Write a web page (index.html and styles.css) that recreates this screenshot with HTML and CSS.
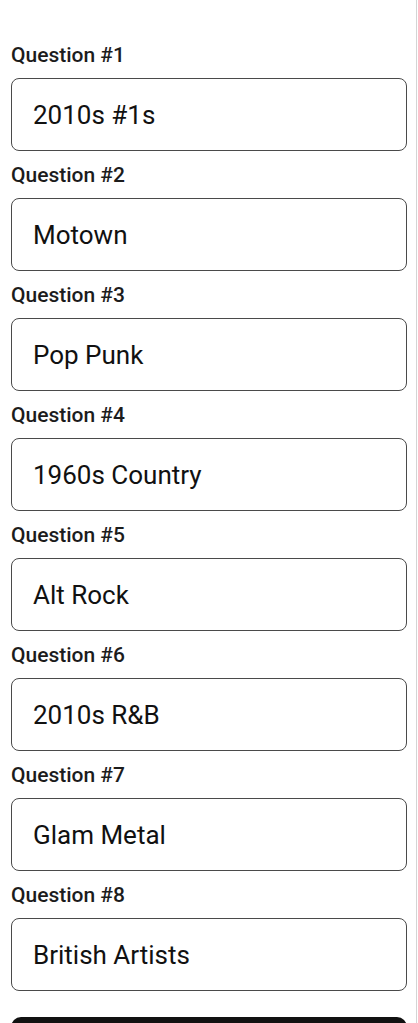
FILE: index.html
```html
<!DOCTYPE html>
<html lang="en">
<head>
    <meta charset="UTF-8">
    <meta name="viewport" content="width=device-width, initial-scale=1.0">
    <title>Quiz Categories</title>
    <link rel="stylesheet" href="styles.css">
</head>
<body>

    <div class="page">
        <form class="quiz-form">
            <label for="q1">Question #1</label>
            <input type="text" id="q1" value="2010s #1s">

            <label for="q2">Question #2</label>
            <input type="text" id="q2" value="Motown">

            <label for="q3">Question #3</label>
            <input type="text" id="q3" value="Pop Punk">

            <label for="q4">Question #4</label>
            <input type="text" id="q4" value="1960s Country">

            <label for="q5">Question #5</label>
            <input type="text" id="q5" value="Alt Rock">

            <label for="q6">Question #6</label>
            <input type="text" id="q6" value="2010s R&amp;B">

            <label for="q7">Question #7</label>
            <input type="text" id="q7" value="Glam Metal">

            <label for="q8">Question #8</label>
            <input type="text" id="q8" value="British Artists">

            <button type="submit">Start Quiz</button>
        </form>
    </div>

</body>
</html>
```

FILE: styles.css
```css
/* Global */
body {
    font-family: Roboto, 'Liberation Sans', sans-serif;
    margin: 0;
    padding: 0;
    background-color: #fff;
    color: #1a1a1a;
}

/* Page */
.page {
    width: 417px;
    border-right: 1px solid #d4d4d4;
    padding: 43px 9px 40px 11px;
    box-sizing: border-box;
    min-height: 100vh;
}

/* Form */
.quiz-form {
    display: flex;
    flex-direction: column;
}

label {
    font-size: 21px;
    font-weight: 500;
    line-height: 24px;
    margin-bottom: 11px;
    color: #1c1c1c;
}

input {
    height: 73px;
    box-sizing: border-box;
    border: 1px solid #4a4a4a;
    border-radius: 8px;
    padding: 0 21px;
    font-family: Roboto, 'Liberation Sans', sans-serif;
    font-size: 26px;
    color: #111;
    background-color: #fff;
    margin-bottom: 12px;
}

/* Start button */
button {
    margin-top: 14px;
    height: 64px;
    background-color: #111;
    color: #fff;
    border: none;
    border-radius: 10px;
    font-family: Roboto, 'Liberation Sans', sans-serif;
    font-size: 22px;
    cursor: pointer;
}
```
